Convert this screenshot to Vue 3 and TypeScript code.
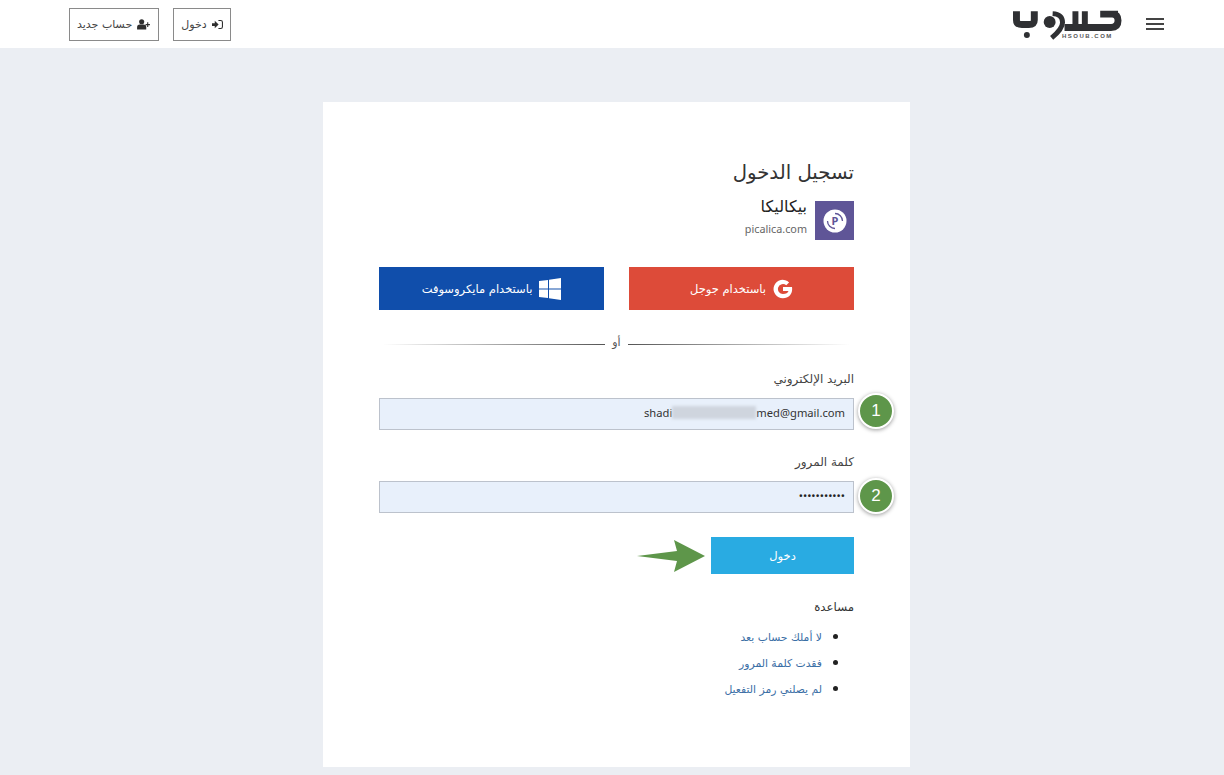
<template>
  <div class="page" dir="rtl">
    <header class="topbar">
      <div class="brand">
        <button class="burger" aria-label="menu"><i></i><i></i><i></i></button>
        <div class="logo">
          <svg width="110" height="30" viewBox="0 0 110 30" fill="none" stroke="#2f3033" stroke-width="7">
            <path d="M106 4H88M106 4Q106 4 100 4Q106 4 106 10.500Q106 17.500 99 17.500H52" />
            <path d="M63 1V17M72.500 1V17" stroke-width="6" />
            <path d="M40 3.500Q50 4 50 12.500Q50 19 39 28" stroke-width="5" />
            <circle cx="37" cy="12" r="6" fill="#2f3033" stroke="none" />
            <path d="M3.500 1V10Q3.500 14.500 9 14.500H16Q21.500 14.500 21.500 10V1" />
            <circle cx="14" cy="25" r="3" fill="#2f3033" stroke="none" />
          </svg>
          <span class="logo-sub" dir="ltr">HSOUB.COM</span>
        </div>
      </div>
      <nav class="actions">
        <a class="outline-btn">
          <svg width="11" height="11" viewBox="0 0 12 12" fill="#2f2f2f"><path d="M0 4.500h3V2l4.200 4L3 10V7.500H0zM7 1h2.500A2.500 2.500 0 0 1 12 3.500v5A2.500 2.500 0 0 1 9.500 11H7V9.800h2.500a1.300 1.300 0 0 0 1.300-1.300v-5a1.300 1.300 0 0 0-1.300-1.300H7z" /></svg>
          دخول
        </a>
        <a class="outline-btn">
          <svg width="13" height="11" viewBox="0 0 14 12" fill="#2f2f2f"><circle cx="5" cy="3" r="2.800" /><path d="M0 11.500V9a3 3 0 0 1 3-3h4a3 3 0 0 1 3 3v2.500zM11 3.500h1.200v2H14v1.200h-1.800v2H11v-2H9.200V5.500H11z" /></svg>
          حساب جديد
        </a>
      </nav>
    </header>

    <main class="card">
      <h1 class="title">تسجيل الدخول</h1>
      <div class="app-row">
        <div class="app-icon">
          <svg width="24" height="24" viewBox="0 0 24 24">
            <circle cx="12" cy="12" r="11.500" fill="#fff" />
            <text x="12" y="16" text-anchor="middle" class="app-letter">P</text>
            <path d="M12 4.500a7.500 7.500 0 0 1 7.500 7.500M12 19.500a7.500 7.500 0 0 1-7.500-7.500" fill="none" stroke="#5f5597" stroke-width="1.300" />
          </svg>
        </div>
        <div class="app-text">
          <div class="app-name">بيكاليكا</div>
          <div class="app-url" dir="ltr">picalica.com</div>
        </div>
      </div>

      <div class="socials">
        <a class="social google">
          <svg width="20" height="20" viewBox="0 0 24 24" fill="#fff"><path d="M12 9.600v4.700h6.600c-.7 2.300-2.900 3.700-6.600 3.700a6 6 0 1 1 3.900-10.500l3.400-3.400A11 11 0 1 0 12 23c6.600 0 11-4.400 11-11 0-.8-.1-1.600-.2-2.400z" /></svg>
          باستخدام جوجل
        </a>
        <a class="social microsoft">
          <svg width="22" height="22" viewBox="0 0 22 22" fill="#fff"><path d="M0 3.100 9 1.900V10.500H0zM10 1.700 22 0V10.500H10zM0 11.500H9V20.100L0 18.900zM10 11.500H22V22L10 20.300z" /></svg>
          باستخدام مايكروسوفت
        </a>
      </div>

      <div class="divider"><span class="line line-r"></span><span class="or">أو</span><span class="line line-l"></span></div>

      <label class="label">البريد الإلكتروني</label>
      <div class="field-wrap">
        <div class="field" dir="ltr">shadi<span class="blurred"></span>med@gmail.com</div>
        <span class="badge">1</span>
      </div>

      <label class="label second">كلمة المرور</label>
      <div class="field-wrap">
        <div class="field dots" dir="ltr">•••••••••••</div>
        <span class="badge low">2</span>
      </div>

      <div class="submit-row">
        <button class="submit">دخول</button>
        <svg class="arrow" width="68" height="34" viewBox="0 0 68 34"><path d="M0 17 40 12 37 1 68 17 37 33 40 22z" fill="#5e964a" /></svg>
      </div>

      <h2 class="help-title">مساعدة</h2>
      <ul class="help">
        <li v-for="link in links" :key="link"><a>{{ link }}</a></li>
      </ul>
    </main>
  </div>
</template>

<script setup lang="ts">
const links: string[] = ['لا أملك حساب بعد', 'فقدت كلمة المرور', 'لم يصلني رمز التفعيل']
</script>

<style>
html,
body {
  margin: 0;
  background: #ebeef3;
}
</style>

<style scoped>
.page {
  min-height: 775px;
  height: 775px;
  overflow: hidden;
  background: #ebeef3;
  font-family: "DejaVu Sans", "Noto Sans", sans-serif;
  color: #333;
  font-size: 11px;
}
.topbar {
  height: 48px;
  background: #fff;
  display: flex;
  justify-content: space-between;
  align-items: center;
  padding: 0 60px 0 69px;
  box-sizing: border-box;
}
.brand {
  display: flex;
  align-items: center;
  gap: 24px;
}
.burger {
  width: 18px;
  padding: 0;
  border: 0;
  background: none;
  display: flex;
  flex-direction: column;
  gap: 3px;
  align-items: center;
}
.burger i {
  display: block;
  width: 18px;
  height: 2px;
  background: #444;
}
.logo {
  position: relative;
  width: 109px;
  height: 30px;
  margin-top: 1px;
}
.logo svg {
  display: block;
  width: 109px;
}
.logo-sub {
  position: absolute;
  left: 49px;
  top: 23px;
  font-family: "Liberation Sans", sans-serif;
  font-size: 6px;
  font-weight: 700;
  letter-spacing: 1.500px;
  color: #555;
  white-space: nowrap;
}
.actions {
  display: flex;
  gap: 14px;
}
.outline-btn {
  height: 33px;
  box-sizing: border-box;
  border: 1px solid #8a8a8a;
  display: flex;
  align-items: center;
  gap: 5px;
  padding: 0 7px;
  font-size: 11px;
  color: #444;
}
.outline-btn + .outline-btn {
  padding: 0 8px 0 7px;
}
.card {
  width: 587px;
  height: 665px;
  box-sizing: border-box;
  margin: 54px 314px 0 0;
  background: #fff;
  padding: 56px 56px 0;
}
.title {
  margin: 0;
  font-size: 19.700px;
  font-weight: 400;
  line-height: 30px;
  color: #333;
}
.app-row {
  display: flex;
  gap: 8px;
  margin-top: 13px;
}
.app-icon {
  width: 39px;
  height: 39px;
  background: #5f5597;
  display: flex;
  align-items: center;
  justify-content: center;
}
.app-letter {
  font-family: "Noto Sans", sans-serif;
  font-size: 11px;
  font-weight: 700;
  fill: #5f5597;
}
.app-name {
  font-size: 16px;
  line-height: 18px;
  color: #222;
  margin-top: -3px;
}
.app-url {
  font-family: "Noto Sans", sans-serif;
  font-size: 10.800px;
  line-height: 16px;
  margin-top: 5px;
  color: #666;
  text-align: right;
}
.socials {
  display: flex;
  justify-content: space-between;
  margin-top: 27px;
}
.social {
  width: 225px;
  height: 43px;
  display: flex;
  align-items: center;
  justify-content: center;
  gap: 7px;
  color: #fff;
  font-size: 11.500px;
}
.google {
  background: #dd4b39;
}
.microsoft {
  background: #104eab;
}
.divider {
  display: flex;
  align-items: center;
  margin-top: 26px;
  height: 16px;
  padding: 0 4px;
}
.line {
  flex: 1;
  height: 1px;
}
.line-r {
  background: linear-gradient(to left, #fff, #555);
}
.line-l {
  background: linear-gradient(to right, #fff, #555);
}
.or {
  padding: 0 7px;
  font-size: 11px;
  line-height: 13px;
  margin-bottom: 3px;
  color: #555;
}
.label {
  display: block;
  margin-top: 20px;
  font-size: 12px;
  line-height: 15px;
  color: #444;
}
.label.second {
  margin-top: 25px;
}
.field-wrap {
  position: relative;
  margin-top: 11px;
}
.field {
  height: 32px;
  box-sizing: border-box;
  border: 1px solid #bcc2cc;
  background: #e8f0fb;
  padding: 0 8px 3px;
  display: flex;
  align-items: center;
  justify-content: flex-end;
  font-family: "Noto Sans", sans-serif;
  font-size: 11.200px;
  color: #333;
}
.dots {
  color: #222;
}
.blurred {
  display: block;
  width: 84px;
  height: 13px;
  background: #cfd5de;
  filter: blur(1.500px);
}
.badge {
  position: absolute;
  right: -40px;
  top: -5px;
  width: 32px;
  height: 32px;
  border: 2px solid #fff;
  border-radius: 50%;
  background: #5e964a;
  box-shadow: 0 1px 4px rgba(0, 0, 0, 0.4);
  color: #fff;
  font-family: "Liberation Sans", sans-serif;
  font-size: 17px;
  display: flex;
  align-items: center;
  justify-content: center;
}
.badge.low {
  top: -3px;
}
.submit-row {
  position: relative;
  margin-top: 24px;
}
.submit {
  display: block;
  width: 143px;
  height: 37px;
  border: 0;
  padding: 0;
  background: #29abe2;
  color: #fff;
  font-family: inherit;
  font-size: 11.500px;
}
.arrow {
  position: absolute;
  right: 149px;
  top: 2px;
}
.help-title {
  margin: 25px 0 0;
  font-size: 11.800px;
  font-weight: 400;
  line-height: 16px;
  color: #333;
}
.help {
  margin: 8px 0 0;
  padding: 0 32px 0 0;
}
.help li {
  height: 26px;
  line-height: 26px;
  font-size: 15px;
  color: #222;
}
.help a {
  font-size: 10.800px;
  color: #3a6ea5;
}
</style>
